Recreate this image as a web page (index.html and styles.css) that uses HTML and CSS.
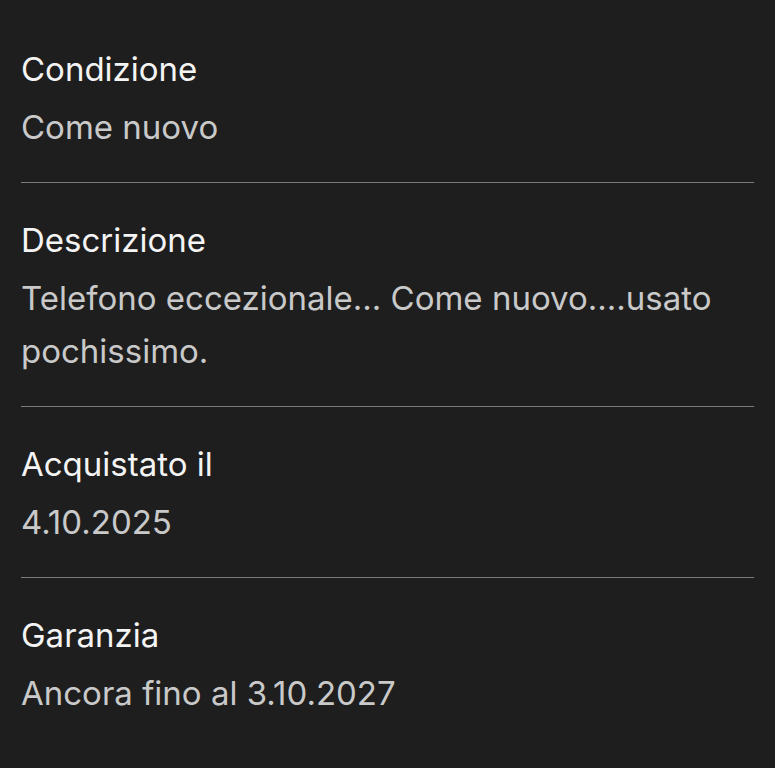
FILE: index.html
```html
<!DOCTYPE html>
<html lang="it">
<head>
    <meta charset="UTF-8">
    <meta name="viewport" content="width=device-width, initial-scale=1.0">
    <title>Dettagli</title>
    <link rel="stylesheet" href="styles.css">
</head>
<body>
    <div class="details">
        <div class="item">
            <h3 class="label">Condizione</h3>
            <p class="value">Come nuovo</p>
        </div>
        <div class="item">
            <h3 class="label">Descrizione</h3>
            <p class="value">Telefono eccezionale... Come nuovo....usato pochissimo.</p>
        </div>
        <div class="item">
            <h3 class="label">Acquistato il</h3>
            <p class="value">4.10.2025</p>
        </div>
        <div class="item last">
            <h3 class="label">Garanzia</h3>
            <p class="value">Ancora fino al 3.10.2027</p>
        </div>
    </div>
</body>
</html>
```

FILE: styles.css
```css
* {
    margin: 0;
    padding: 0;
    box-sizing: border-box;
}

body {
    font-family: Inter, Lato, sans-serif;
    background-color: #1e1e1e;
    color: #f2f2f2;
    height: 100vh;
    overflow: hidden;
}

.details {
    padding: 12px 21px 0 21px;
}

.item {
    padding: 37px 0 28px 0;
    border-bottom: 1px solid #7a7a7a;
}

.item.last {
    border-bottom: none;
}

.label {
    font-size: 33px;
    font-weight: 400;
    line-height: 40px;
    color: #f4f4f4;
    margin-bottom: 12px;
}

.value {
    font-size: 33px;
    line-height: 53px;
    color: #c9c9c9;
    padding-right: 40px;
}
```
